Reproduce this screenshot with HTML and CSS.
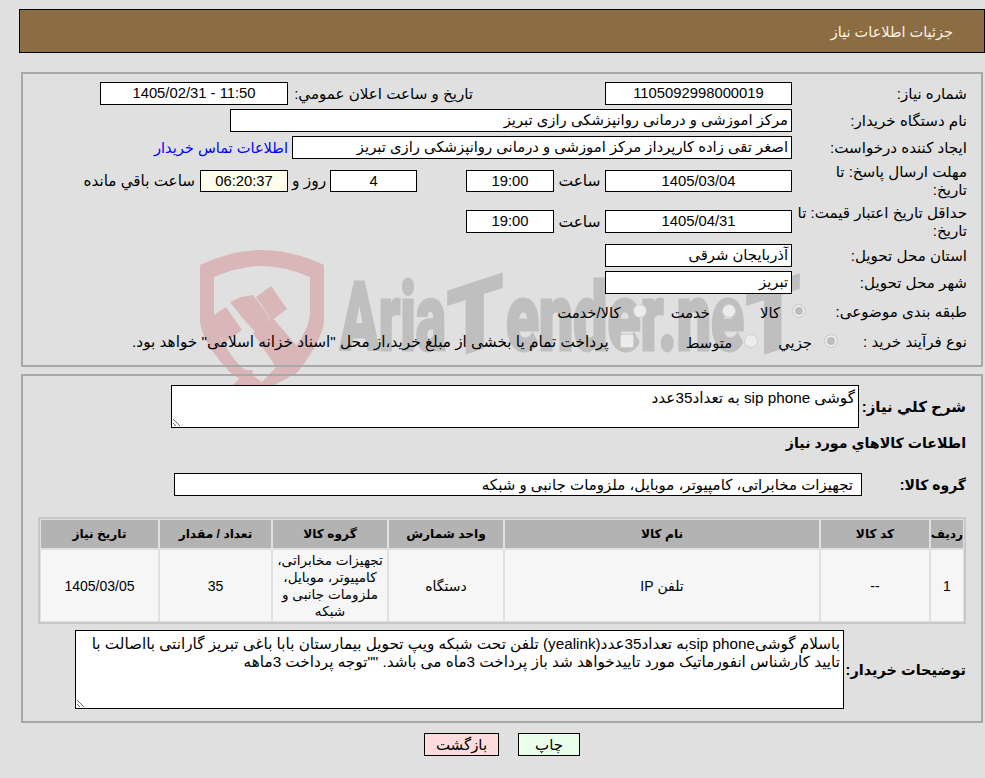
FILE: index.html
```html
<!DOCTYPE html>
<html lang="fa" dir="rtl">
<head>
<meta charset="utf-8">
<title>جزئیات اطلاعات نیاز</title>
<link rel="stylesheet" href="styles.css">
</head>
<body>
<svg class="watermark" width="985" height="400" viewBox="0 0 985 400" aria-hidden="true">
  <path class="wm-red" fill-rule="evenodd" d="M200 265Q232 250 262 250Q292 250 324 265L324 322Q322 340 298 372L262 392L232 374Q203 345 200 322ZM214 277Q240 266 262 266Q284 266 310 277L310 315Q308 330 296 346L262 382L240 366Q216 338 214 318Z"/>
  <path class="wm-red" d="M271 286L287 309L272 320L256 297ZM241 297L253 295L270 318L255 332L241 316L230 302ZM226 307L242 330L224 343L208 319ZM272 317L296 345L292 375L280 373L253 333ZM227 370L252 370L257 386L232 386L240 378Z"/>
  <g class="wm-gray">
    <text x="340" y="350" textLength="106" lengthAdjust="spacingAndGlyphs">Aria</text>
    <text transform="translate(447 350) skewY(-18)" x="0" y="9" textLength="56" lengthAdjust="spacingAndGlyphs">T</text>
    <text x="506" y="350" textLength="238" lengthAdjust="spacingAndGlyphs">ender.ne</text>
    <text transform="translate(746 350) skewY(-18)" x="0" y="9" textLength="54" lengthAdjust="spacingAndGlyphs">T</text>
  </g>
</svg>

<div class="page">
  <header class="title-bar">جزئیات اطلاعات نیاز</header>

  <section class="panel panel-info">
    <div class="row">
      <div class="label">شماره نیاز:</div>
      <div class="field f187 center">1105092998000019</div>
      <div class="label announce">تاریخ و ساعت اعلان عمومي:</div>
      <div class="field f188 center">11:50 - 1405/02/31</div>
    </div>
    <div class="row">
      <div class="label">نام دستگاه خریدار:</div>
      <div class="field f562">مرکز اموزشی و درمانی روانپزشکی رازی تبریز</div>
    </div>
    <div class="row">
      <div class="label">ایجاد کننده درخواست:</div>
      <div class="field f500">اصغر تقی زاده کارپرداز مرکز اموزشی و درمانی روانپزشکی رازی تبریز</div>
      <a class="contact" href="#">اطلاعات تماس خریدار</a>
    </div>
    <div class="row row-tall row-a">
      <div class="label">مهلت ارسال پاسخ: تا<br>تاریخ:</div>
      <div class="field f187 center short">1405/03/04</div>
      <div class="unit">ساعت</div>
      <div class="field f88 center short">19:00</div>
      <div class="field f88 center short days">4</div>
      <div class="day-text">روز و</div>
      <div class="field f88 center short timer">06:20:37</div>
      <div class="remain">ساعت باقي مانده</div>
    </div>
    <div class="row row-tall row-b">
      <div class="label">حداقل تاریخ اعتبار قیمت: تا<br>تاریخ:</div>
      <div class="field f187 center">1405/04/31</div>
      <div class="unit">ساعت</div>
      <div class="field f88 center">19:00</div>
    </div>
    <div class="row row-c">
      <div class="label">استان محل تحویل:</div>
      <div class="field f187">آذربایجان شرقی</div>
    </div>
    <div class="row">
      <div class="label">شهر محل تحویل:</div>
      <div class="field f187">تبریز</div>
    </div>
    <div class="row row-choice row-d">
      <div class="label label-d">طبقه بندی موضوعی:</div>
      <div class="choices">
        <label class="choice"><input type="radio" name="cat" checked disabled>کالا</label>
        <label class="choice"><input type="radio" name="cat" disabled>خدمت</label>
        <label class="choice"><input type="radio" name="cat" disabled>کالا/خدمت</label>
      </div>
    </div>
    <div class="row row-choice row-e">
      <div class="label label-e">نوع فرآیند خرید :</div>
      <div class="choices choices-e">
        <label class="choice"><input type="radio" name="proc" checked disabled>جزيي</label>
        <label class="choice"><input type="radio" name="proc" disabled>متوسط</label>
        <label class="choice choice-pay"><input type="checkbox" disabled>پرداخت تمام یا بخشی از مبلغ خرید،از محل "اسناد خزانه اسلامی" خواهد بود.</label>
      </div>
    </div>
  </section>

  <section class="panel panel-items">
    <div class="line">
      <div class="strong w107">شرح کلي نياز:</div>
      <textarea class="box box-desc" readonly>گوشی sip phone به تعداد35عدد</textarea>
    </div>
    <div class="strong section-title">اطلاعات کالاهاي مورد نياز</div>
    <div class="line line-group">
      <div class="strong strong-group w104">گروه کالا:</div>
      <div class="field f688 group">تجهیزات مخابراتی، کامپیوتر، موبایل، ملزومات جانبی و شبکه</div>
    </div>
    <table class="items">
      <colgroup>
        <col class="c1"><col class="c2"><col class="c3"><col class="c4"><col class="c5"><col class="c6"><col class="c7">
      </colgroup>
      <thead>
        <tr><th>ردیف</th><th>کد کالا</th><th>نام کالا</th><th>واحد شمارش</th><th>گروه کالا</th><th>تعداد / مقدار</th><th>تاریخ نیاز</th></tr>
      </thead>
      <tbody>
        <tr>
          <td>1</td><td>--</td><td>تلفن IP</td><td>دستگاه</td>
          <td class="group-cell">تجهیزات مخابراتی، کامپیوتر، موبایل، ملزومات جانبی و شبکه</td>
          <td>35</td><td>1405/03/05</td>
        </tr>
      </tbody>
    </table>
    <div class="line line-notes">
      <div class="strong strong-notes w122">توضیحات خریدار:</div>
      <textarea class="box box-notes" readonly>باسلام گوشیsip phoneبه تعداد35عدد(yealink) تلفن تحت شبکه ویپ تحویل بیمارستان بابا باغی تبریز گارانتی بااصالت با تایید کارشناس انفورماتیک مورد تاییدخواهد شد باز پرداخت 3ماه می باشد. ""توجه پرداخت 3ماهه</textarea>
    </div>
  </section>

  <div class="actions">
    <button class="btn btn-print" type="button">چاپ</button>
    <button class="btn btn-back" type="button">بازگشت</button>
  </div>
</div>
</body>
</html>
```
FILE: styles.css
```css
* { box-sizing: border-box; }
html { background: #e0e0e0; }
body {
  margin: 0;
  height: 778px;
  overflow: hidden;
  position: relative;
  font-family: "Liberation Sans", "DejaVu Sans", sans-serif;
  font-size: 14.8px;
  color: #000;
}
.watermark { position: absolute; left: 0; top: 0; z-index: 0; }
.wm-red { fill: #d9b6b8; }
.wm-gray text {
  direction: ltr;
  font-family: Roboto, "Liberation Sans", sans-serif;
  font-weight: 900;
  font-size: 94px;
  fill: #bfbfbf;
  stroke: #bfbfbf;
  stroke-width: 3px;
}
.page { position: relative; z-index: 1; padding-top: 9px; }
.title-bar {
  margin-left: 19px;
  height: 44px;
  border: 1px solid #000;
  background: #8c6c42;
  color: #f7f2e4;
  padding: 0 31px 0 0;
  line-height: 44px;
  font-size: 14.5px;
}
.panel {
  margin-left: 21px;
  margin-right: 2px;
  border: 2px solid #a8a8a8;
}
.panel-info { margin-top: 19px; height: 295px; padding-top: 8px; padding-right: 14px; }
.panel-items { margin-top: 7px; height: 349px; padding-top: 9px; padding-right: 15px; padding-left: 15px; }
.row { display: flex; align-items: center; height: 23px; margin-bottom: 4px; }
.row-tall { height: 34px; }
.row-a { margin-top: 5px; margin-bottom: 6px; }
.row-b { height: 35px; margin-bottom: 5px; }
.row-choice { height: 24px; }
.row-d { margin-top: 6px; margin-bottom: 6px; }
.label { width: 175px; line-height: 18px; flex: none; white-space: nowrap; font-size: 15.1px; }
.label-d { width: 161px; }
.label-e { width: 129px; }
.label.announce { width: 185px; margin-right: 132px; }
.field {
  flex: none;
  height: 23px;
  line-height: 21px;
  border: 1px solid #000;
  background: #fff;
  padding: 0 3px;
  white-space: nowrap;
  overflow: hidden;
}
.short { height: 22px; line-height: 20px; }
.center { text-align: center; }
.f187 { width: 187px; }
.f188 { width: 188px; }
.f88 { width: 88px; }
.f562 { width: 562px; }
.f500 { width: 500px; }
.f688 { width: 688px; }
.contact { color: #00f; text-decoration: none; margin-right: 4px; font-size: 14.6px; }
.unit { width: 51px; text-align: center; flex: none; font-size: 15.5px; }
.days { margin-right: 49px; width: 87px; }
.day-text { width: 42px; text-align: center; flex: none; font-size: 15.5px; }
.timer { background: #ffffec; }
.remain { margin-right: 5px; font-size: 15.2px; }
.choices { display: flex; align-items: center; gap: 24px; }
.choices-e { gap: 20px; }
.choice { display: flex; align-items: center; gap: 12px; white-space: nowrap; }
.choice-pay { margin-right: 32px; gap: 11px; font-size: 15.3px; }
.choice input {
  appearance: none;
  -webkit-appearance: none;
  width: 14px;
  height: 14px;
  margin: 0;
  border-radius: 50%;
  border: 1px solid #cfcfcf;
  background: #ececec;
  flex: none;
  position: relative;
  top: -1px;
}
.choice input:checked { background: #bdbdbd; box-shadow: inset 0 0 0 2px #efefef; }
.choice input[type="checkbox"] { border-radius: 2px; }
.line { display: flex; align-items: center; }
.strong { font-weight: 700; font-size: 15px; flex: none; white-space: nowrap; }
.strong-group { font-size: 14px; }
.strong-notes { font-size: 14.5px; }
.w107 { width: 107px; }
.w104 { width: 104px; }
.w122 { width: 122px; }
.section-title { margin-top: 5px; height: 20px; line-height: 20px; font-size: 14.2px; }
.line-group { margin-top: 20px; }
.group { padding-right: 8px; font-size: 15px; }
.box {
  display: block;
  border: 1px solid #000;
  background: #fff;
  font-family: inherit;
  font-size: 15.25px;
  color: #000;
  padding: 3px 3px 2px;
  margin: 0;
  outline: none;
  line-height: 18px;
  direction: rtl;
}
.box-desc { width: 688px; height: 43px; }
.box-notes { width: 769px; height: 79px; padding-top: 4px; }
.items {
  margin-top: 21px;
  width: 928px;
  table-layout: fixed;
  border-collapse: separate;
  border-spacing: 2px;
  border: 1px solid #c8c8c8;
  box-shadow: inset 0 0 0 1px #c8c8c8;
  font-size: 14px;
}
.items th {
  height: 28px;
  padding: 0;
  background: #b3b3b3;
  font-weight: 700;
  font-size: 12.2px;
  overflow: hidden;
  white-space: nowrap;
}
.items td {
  height: 71px;
  padding: 0;
  background: #f6f6f6;
  text-align: center;
}
.items td.group-cell { line-height: 17px; padding: 0 2px; font-size: 13.6px; }
.c1 { width: 32px; }
.c2 { width: 108px; }
.c3 { width: 314px; }
.c4 { width: 114px; }
.c5 { width: 114px; }
.c6 { width: 111px; }
.c7 { width: 117px; }
.line-notes { margin-top: 6px; }
.actions {
  display: flex;
  justify-content: center;
  gap: 19px;
  margin-left: 19px;
  margin-top: 10px;
}
.btn {
  height: 23px;
  border: 1px solid #000;
  font-family: inherit;
  font-size: 15px;
  color: #000;
  padding: 0;
}
.btn-print { width: 62px; background: #e9ffe9; }
.btn-back { width: 75px; background: #ffdcdc; }
```
